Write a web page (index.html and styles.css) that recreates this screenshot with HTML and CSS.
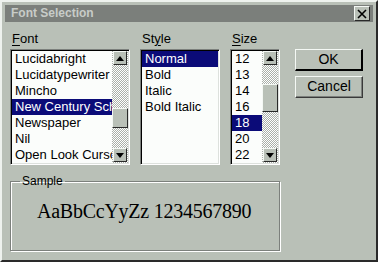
FILE: index.html
```html
<!DOCTYPE html>
<html>
<head>
<meta charset="utf-8">
<link rel="stylesheet" href="styles.css">
</head>
<body>
<div class="window">
  <div class="titlebar">
    <span class="title">Font Selection</span>
    <span class="close"><svg width="10" height="10" viewBox="0 0 10 10"><path d="M1 1 L9 9 M9 1 L1 9" stroke="#000" stroke-width="1.6" fill="none"/></svg></span>
  </div>
  <div class="content">
    <div class="row">
      <div class="col col-font">
        <div class="label"><u>F</u>ont</div>
        <div class="list">
          <div class="items">
            <div class="item">Lucidabright</div>
            <div class="item">Lucidatypewriter</div>
            <div class="item">Mincho</div>
            <div class="item sel">New Century Schoolbook</div>
            <div class="item">Newspaper</div>
            <div class="item">Nil</div>
            <div class="item">Open Look Cursor</div>
          </div>
          <div class="scroll">
            <div class="arrow"><span class="tri up"></span></div>
            <div class="thumb thumb-font"></div>
            <div class="arrow down-btn"><span class="tri down"></span></div>
          </div>
        </div>
      </div>
      <div class="col col-style">
        <div class="label">St<u>y</u>le</div>
        <div class="list">
          <div class="items">
            <div class="item sel">Normal</div>
            <div class="item">Bold</div>
            <div class="item">Italic</div>
            <div class="item">Bold Italic</div>
          </div>
        </div>
      </div>
      <div class="col col-size">
        <div class="label"><u>S</u>ize</div>
        <div class="list">
          <div class="items">
            <div class="item">12</div>
            <div class="item">13</div>
            <div class="item">14</div>
            <div class="item">16</div>
            <div class="item sel">18</div>
            <div class="item">20</div>
            <div class="item">22</div>
          </div>
          <div class="scroll">
            <div class="arrow"><span class="tri up"></span></div>
            <div class="thumb thumb-size"></div>
            <div class="arrow down-btn"><span class="tri down"></span></div>
          </div>
        </div>
      </div>
      <div class="col col-buttons">
        <div class="btn btn-default">OK</div>
        <div class="btn">Cancel</div>
      </div>
    </div>
    <fieldset class="sample">
      <legend>Sample</legend>
      <div class="sample-text">AaBbCcYyZz 1234567890</div>
    </fieldset>
  </div>
</div>
</body>
</html>
```
FILE: styles.css
```css
html, body {
  margin: 0;
  padding: 0;
  background: #b9c0b7;
}
body {
  font-family: "Liberation Sans", Arial, sans-serif;
  font-size: 13px;
  color: #000;
}
.window {
  box-sizing: border-box;
  width: 378px;
  height: 262px;
  background: #b9c0b7;
  border: 2px solid;
  border-color: #eef2ee #2a2a2a #2a2a2a #eef2ee;
  padding: 3px;
  overflow: hidden;
}
.titlebar {
  height: 17px;
  background: #7b7f7b;
  display: flex;
  align-items: flex-start;
  justify-content: space-between;
}
.title {
  font-weight: bold;
  font-size: 12px;
  line-height: 15px;
  color: #c8ccc8;
  padding-left: 6px;
  padding-top: 1px;
}
.close {
  box-sizing: border-box;
  width: 16px;
  height: 15px;
  margin: 1px 3px 0 0;
  background: #b9c0b7;
  border: 1px solid;
  border-color: #f4f8f4 #2a2a2a #2a2a2a #f4f8f4;
  display: flex;
  align-items: center;
  justify-content: center;
}
.content {
  padding: 9px 0 0 5px;
}
.row {
  display: flex;
  align-items: flex-start;
}
.col-font { width: 120px; }
.col-style { width: 80px; margin-left: 10px; }
.col-size { width: 50px; margin-left: 10px; }
.col-buttons {
  width: 68px;
  margin-left: 15px;
  padding-top: 18px;
  display: flex;
  flex-direction: column;
  gap: 5px;
}
.label {
  height: 16px;
  line-height: 16px;
  margin-bottom: 2px;
  padding-left: 2px;
}
.label u {
  text-underline-offset: 2px;
}
.list {
  box-sizing: border-box;
  height: 116px;
  background: #fbfdfb;
  border: 1px solid;
  border-color: #7c807c #ffffff #ffffff #7c807c;
  box-shadow: inset 1px 1px 0 #000, inset -1px -1px 0 #dde1dd;
  padding: 1px;
  display: flex;
}
.items {
  flex: 1;
  min-width: 0;
  overflow: hidden;
  white-space: nowrap;
}
.item {
  height: 16px;
  line-height: 16px;
  padding-left: 3px;
  overflow: hidden;
}
.item.sel {
  background: #0b0b78;
  color: #fff;
}
.scroll {
  width: 16px;
  flex: none;
  display: flex;
  flex-direction: column;
  background: repeating-conic-gradient(#ffffff 0% 25%, #aab0a9 0% 50%) 0 0 / 2px 2px;
}
.arrow {
  box-sizing: border-box;
  width: 14px;
  height: 14px;
  margin: 0 1px;
  background: #b9c0b7;
  border: 1px solid;
  border-color: #f4f8f4 #2a2a2a #2a2a2a #f4f8f4;
  display: flex;
  align-items: center;
  justify-content: center;
}
.down-btn {
  margin-top: auto;
  margin-bottom: 1px;
}
.tri {
  width: 0;
  height: 0;
  border-left: 4px solid transparent;
  border-right: 4px solid transparent;
}
.tri.up { border-bottom: 5px solid #000; }
.tri.down { border-top: 5px solid #000; }
.thumb {
  box-sizing: border-box;
  width: 16px;
  background: #b9c0b7;
  border: 1px solid;
  border-color: #f4f8f4 #2a2a2a #2a2a2a #f4f8f4;
}
.thumb-font { margin-top: 43px; height: 20px; }
.thumb-size { margin-top: 19px; height: 28px; }
.btn {
  box-sizing: border-box;
  height: 22px;
  line-height: 19px;
  text-align: center;
  font-size: 14px;
  background: #b9c0b7;
  border: 1px solid;
  border-color: #f4f8f4 #3a3a3a #3a3a3a #f4f8f4;
  box-shadow: inset -1px -1px 0 #7c807c;
}
.btn-default {
  border-width: 1px 2px 2px 1px;
  border-color: #f4f8f4 #000 #000 #f4f8f4;
  box-shadow: none;
}
.sample {
  box-sizing: border-box;
  width: 270px;
  margin: 9px 0 0 0;
  padding: 0 0 28px 0;
  border: 1px solid #7c807c;
  box-shadow: 1px 1px 0 #fff, inset 1px 1px 0 #fff;
}
.sample legend {
  font-size: 12px;
  line-height: 14px;
  padding: 0 2px;
  margin-left: 9px;
}
.sample-text {
  margin-top: 12px;
  padding-left: 26px;
  font-family: "Liberation Serif", "Times New Roman", serif;
  font-size: 20px;
  line-height: 22px;
  letter-spacing: -0.25px;
}
```
